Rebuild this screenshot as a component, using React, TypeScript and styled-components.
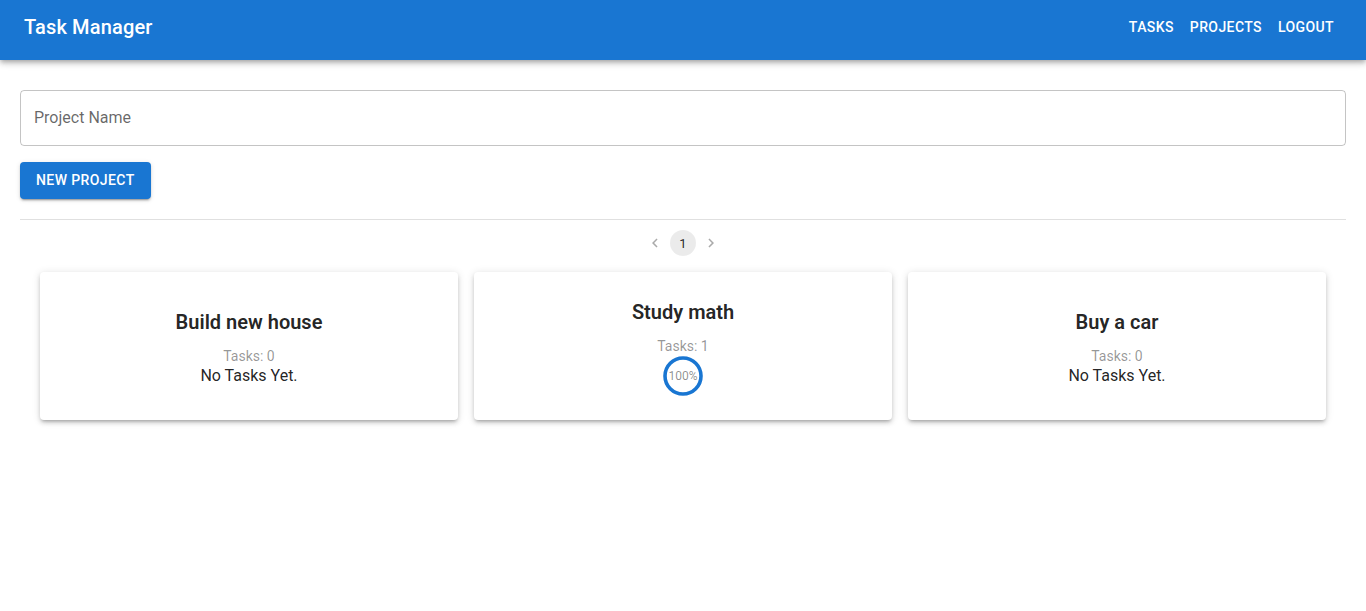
import React from "react";
import styled, { createGlobalStyle } from "styled-components";

const Global = createGlobalStyle`
  * { box-sizing: border-box; }
  body { margin: 0; font-family: Roboto, "Liberation Sans", Arial, sans-serif; background: #fff; color: rgba(0,0,0,0.87); }
`;

const AppBar = styled.header`
  height: 60px;
  background: #1976d2;
  color: #fff;
  display: flex;
  align-items: center;
  justify-content: space-between;
  padding: 0 24px 6px;
  box-shadow: 0px 2px 4px -1px rgba(0,0,0,0.2), 0px 4px 5px 0px rgba(0,0,0,0.14), 0px 1px 10px 0px rgba(0,0,0,0.12);
  position: relative;
  z-index: 2;
`;

const Brand = styled.h1`
  margin: 0;
  font-size: 20px;
  font-weight: 500;
  letter-spacing: 0.0075em;
  line-height: 1.6;
`;

const Nav = styled.nav`
  display: flex;
  align-items: center;
`;

const NavButton = styled.button`
  background: none;
  border: 0;
  color: #fff;
  font-family: inherit;
  font-size: 14px;
  font-weight: 500;
  letter-spacing: 0.02857em;
  text-transform: uppercase;
  padding: 6px 8px;
  line-height: 1.75;
  border-radius: 4px;
  cursor: pointer;
`;

const Main = styled.main`
  padding: 30px 20px 20px;
`;

const Field = styled.div`
  height: 56px;
  border: 1px solid rgba(0,0,0,0.23);
  border-radius: 4px;
  display: flex;
  align-items: center;
`;

const Input = styled.input`
  flex: 1;
  border: 0;
  outline: none;
  background: transparent;
  font-family: inherit;
  font-size: 16px;
  padding: 15.5px 13px 17.5px;
  color: rgba(0,0,0,0.87);
  &::placeholder { color: rgba(0,0,0,0.6); opacity: 1; }
`;

const PrimaryButton = styled.button`
  margin-top: 16px;
  background: #1976d2;
  color: #fff;
  border: 0;
  border-radius: 4px;
  font-family: inherit;
  font-size: 14px;
  font-weight: 500;
  letter-spacing: 0.02857em;
  text-transform: uppercase;
  padding: 6px 16px;
  line-height: 1.75;
  height: 37px;
  box-shadow: 0px 3px 1px -2px rgba(0,0,0,0.2), 0px 2px 2px 0px rgba(0,0,0,0.14), 0px 1px 5px 0px rgba(0,0,0,0.12);
  cursor: pointer;
`;

const Divider = styled.hr`
  margin: 20px 0 0;
  border: 0;
  border-top: 1px solid rgba(0,0,0,0.12);
`;

const Pager = styled.ul`
  list-style: none;
  margin: 10px 0 0;
  padding: 0;
  display: flex;
  justify-content: center;
  align-items: center;
`;

const PageItem = styled.li<{ $selected?: boolean; $disabled?: boolean }>`
  min-width: 26px;
  height: 26px;
  margin: 0 1px;
  border-radius: 13px;
  display: flex;
  align-items: center;
  justify-content: center;
  font-size: 13px;
  color: rgba(0,0,0,0.87);
  background: ${(p) => (p.$selected ? "rgba(0,0,0,0.08)" : "transparent")};
  opacity: ${(p) => (p.$disabled ? 0.38 : 1)};
`;

const Grid = styled.section`
  display: grid;
  grid-template-columns: repeat(3, 1fr);
  gap: 16px;
  margin-top: 16px;
  padding: 0 20px;
`;

const Card = styled.article<{ $offset?: number }>`
  height: 148px;
  background: #fff;
  border-radius: 4px;
  box-shadow: 0px 3px 3px -2px rgba(0,0,0,0.2), 0px 3px 4px 0px rgba(0,0,0,0.14), 0px 1px 8px 0px rgba(0,0,0,0.12);
  display: flex;
  flex-direction: column;
  align-items: center;
  justify-content: center;
  text-align: center;
  padding-top: ${(p) => p.$offset ?? 0}px;
`;

const CardTitle = styled.h2`
  margin: 0 0 10px;
  font-size: 20px;
  font-weight: 600;
  line-height: 1.6;
  color: rgba(0,0,0,0.87);
`;

const Meta = styled.div`
  font-size: 14px;
  line-height: 16px;
  color: rgba(0,0,0,0.42);
`;

const Empty = styled.div`
  font-size: 16px;
  line-height: 24px;
  color: rgba(0,0,0,0.87);
`;

const Progress = styled.div`
  position: relative;
  width: 40px;
  height: 40px;
  margin-top: 2px;
  display: flex;
  align-items: center;
  justify-content: center;
`;

const ProgressLabel = styled.span`
  position: absolute;
  font-size: 12px;
  color: rgba(0,0,0,0.45);
`;

function CircleProgress({ value }: { value: number }) {
  const r = 18;
  const c = 2 * Math.PI * r;
  return (
    <Progress>
      <svg width="40" height="40" viewBox="0 0 40 40" style={{ transform: "rotate(-90deg)" }}>
        <circle cx="20" cy="20" r={r} fill="none" stroke="#1976d2" strokeWidth="3.6" strokeDasharray={c} strokeDashoffset={c * (1 - value / 100)} />
      </svg>
      <ProgressLabel>{value}%</ProgressLabel>
    </Progress>
  );
}

const Chevron = ({ dir }: { dir: "left" | "right" }) => (
  <svg width="18" height="18" viewBox="0 0 24 24" fill="currentColor">
    {dir === "left" ? (
      <path d="M15.41 7.41 14 6l-6 6 6 6 1.41-1.41L10.83 12z" />
    ) : (
      <path d="M10 6 8.59 7.41 13.17 12l-4.58 4.59L10 18l6-6z" />
    )}
  </svg>
);

const projects = [
  { name: "Build new house", tasks: 0, progress: null as number | null },
  { name: "Study math", tasks: 1, progress: 100 },
  { name: "Buy a car", tasks: 0, progress: null as number | null },
];

export default function App() {
  return (
    <>
      <Global />
      <AppBar>
        <Brand>Task Manager</Brand>
        <Nav>
          <NavButton>Tasks</NavButton>
          <NavButton>Projects</NavButton>
          <NavButton>Logout</NavButton>
        </Nav>
      </AppBar>
      <Main>
        <Field>
          <Input placeholder="Project Name" />
        </Field>
        <PrimaryButton>New Project</PrimaryButton>
        <Divider />
        <Pager>
          <PageItem $disabled><Chevron dir="left" /></PageItem>
          <PageItem $selected>1</PageItem>
          <PageItem $disabled><Chevron dir="right" /></PageItem>
        </Pager>
        <Grid>
          {projects.map((p) => (
            <Card key={p.name} $offset={p.progress === null ? 2 : 0}>
              <CardTitle>{p.name}</CardTitle>
              <Meta>Tasks: {p.tasks}</Meta>
              {p.progress === null ? <Empty>No Tasks Yet.</Empty> : <CircleProgress value={p.progress} />}
            </Card>
          ))}
        </Grid>
      </Main>
    </>
  );
}
